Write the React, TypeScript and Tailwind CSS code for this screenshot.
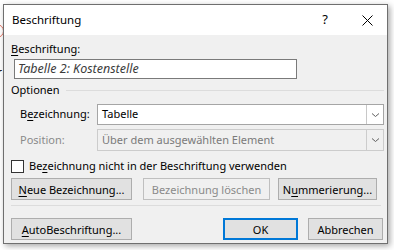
import React from "react";

function Chevron() {
  return (
    <svg width="9" height="6" viewBox="0 0 9 6" className="block">
      <path d="M1 1.5 L4.5 4.5 L8 1.5" fill="none" stroke="#606060" strokeWidth="1" />
    </svg>
  );
}

function Btn({
  children,
  className = "",
  disabled = false,
  primary = false,
}: {
  children: React.ReactNode;
  className?: string;
  disabled?: boolean;
  primary?: boolean;
}) {
  return (
    <button
      className={
        "h-[22px] flex items-center justify-center text-[11px] leading-none " +
        (primary
          ? "border-2 border-[#0078d7] bg-[#e1e1e1] text-black "
          : disabled
          ? "border border-[#bfbfbf] bg-[#f0f0f0] text-[#8a8a8a] "
          : "border border-[#adadad] bg-[#e1e1e1] text-black ") +
        className
      }
    >
      {children}
    </button>
  );
}

export default function App() {
  return (
    <div
      className="relative w-[394px] h-[250px] bg-white overflow-hidden"
      style={{ fontFamily: '"Noto Sans", "Open Sans", sans-serif' }}
    >
      {/* things behind the dialog */}
      <div className="absolute left-[-10px] top-[24px] w-[14px] h-[14px] rounded-full border border-[#e07060]" />
      <div className="absolute left-[-3px] top-[64px] text-[12px] text-black">r</div>

      {/* Dialog */}
      <div className="relative ml-[3px] mt-[4px] w-[385px] h-[240px] border border-[#6f6f6f] bg-[#f0f0f0] shadow-[2px_2px_6px_rgba(0,0,0,0.35)] flex flex-col">
        {/* Title bar */}
        <div className="h-[30px] bg-white flex items-center pl-[8px] text-[11.5px] text-black">
          <span className="flex-1">Beschriftung</span>
          <span className="w-[20px] text-center text-[13px] mr-[22px]">?</span>
          <span className="w-[20px] flex justify-center mr-[10px]">
            <svg width="11" height="11" viewBox="0 0 11 11">
              <path d="M0.5 0.5 L10.5 10.5 M10.5 0.5 L0.5 10.5" stroke="#000" strokeWidth="1" />
            </svg>
          </span>
        </div>

        {/* Body */}
        <div className="flex-1 flex flex-col pl-[7px] pr-[3px] text-[11px] text-black">
          <div className="mt-[6px] h-[16px] leading-[16px]">
            <span className="underline underline-offset-2">B</span>eschriftung:
          </div>
          <div className="mt-[2px] ml-[3px] w-[283px] h-[20px] border border-[#7a7a7a] bg-white flex items-center pl-[3px] italic text-[#3c3c3c] text-[12.5px]">
            Tabelle 2: Kostenstelle
          </div>

          <div className="mt-[3px] h-[16px] leading-[16px] flex items-center">
            <span>Optionen</span>
            <div className="flex-1 ml-[6px] h-px bg-[#dcdcdc]" />
          </div>

          <div className="mt-[6px] flex items-center h-[21px]">
            <span className="w-[86px] pl-[9px]">
              B<span className="underline underline-offset-2">e</span>zeichnung:
            </span>
            <div className="w-[287px] h-[21px] border border-[#a5a5a5] bg-white flex items-center">
              <span className="flex-1 pl-[4px]">Tabelle</span>
              <div className="w-[17px] h-full border-l border-[#c8c8c8] bg-white flex items-center justify-center">
                <Chevron />
              </div>
            </div>
          </div>

          <div className="mt-[4px] flex items-center h-[22px]">
            <span className="w-[86px] pl-[9px] text-[#8a8a8a]">Position:</span>
            <div className="w-[287px] h-[22px] border border-[#cccccc] bg-[#f0f0f0] flex items-center text-[#7a7a7a]">
              <span className="flex-1 pl-[4px]">Über dem ausgewählten Element</span>
              <div className="w-[17px] h-full border-l border-[#cccccc] flex items-center justify-center">
                <Chevron />
              </div>
            </div>
          </div>

          <div className="mt-[7px] flex items-center h-[16px]">
            <div className="w-[13px] h-[13px] border border-[#333] bg-white" />
            <span className="ml-[5px]">
              Be<span className="underline underline-offset-2">z</span>eichnung nicht in der Beschriftung verwenden
            </span>
          </div>

          <div className="mt-[4px] flex items-center">
            <Btn className="w-[121px]">
              <span>
                <span className="underline underline-offset-2">N</span>eue Bezeichnung...
              </span>
            </Btn>
            <Btn className="w-[127px] ml-[11px]" disabled>
              Bezeichnung löschen
            </Btn>
            <Btn className="w-[99px] ml-[8px]">
              <span>
                N<span className="underline underline-offset-2">u</span>mmerierung...
              </span>
            </Btn>
          </div>

          <div className="mt-[5px] mr-[3px] h-px bg-[#dcdcdc]" />

          <div className="mt-[12px] flex items-center">
            <Btn className="w-[121px]">
              <span>
                <span className="underline underline-offset-2">A</span>utoBeschriftung...
              </span>
            </Btn>
            <Btn className="w-[75px] ml-[91px]" primary>
              OK
            </Btn>
            <Btn className="w-[75px] ml-[10px]">Abbrechen</Btn>
          </div>
        </div>
      </div>
    </div>
  );
}
